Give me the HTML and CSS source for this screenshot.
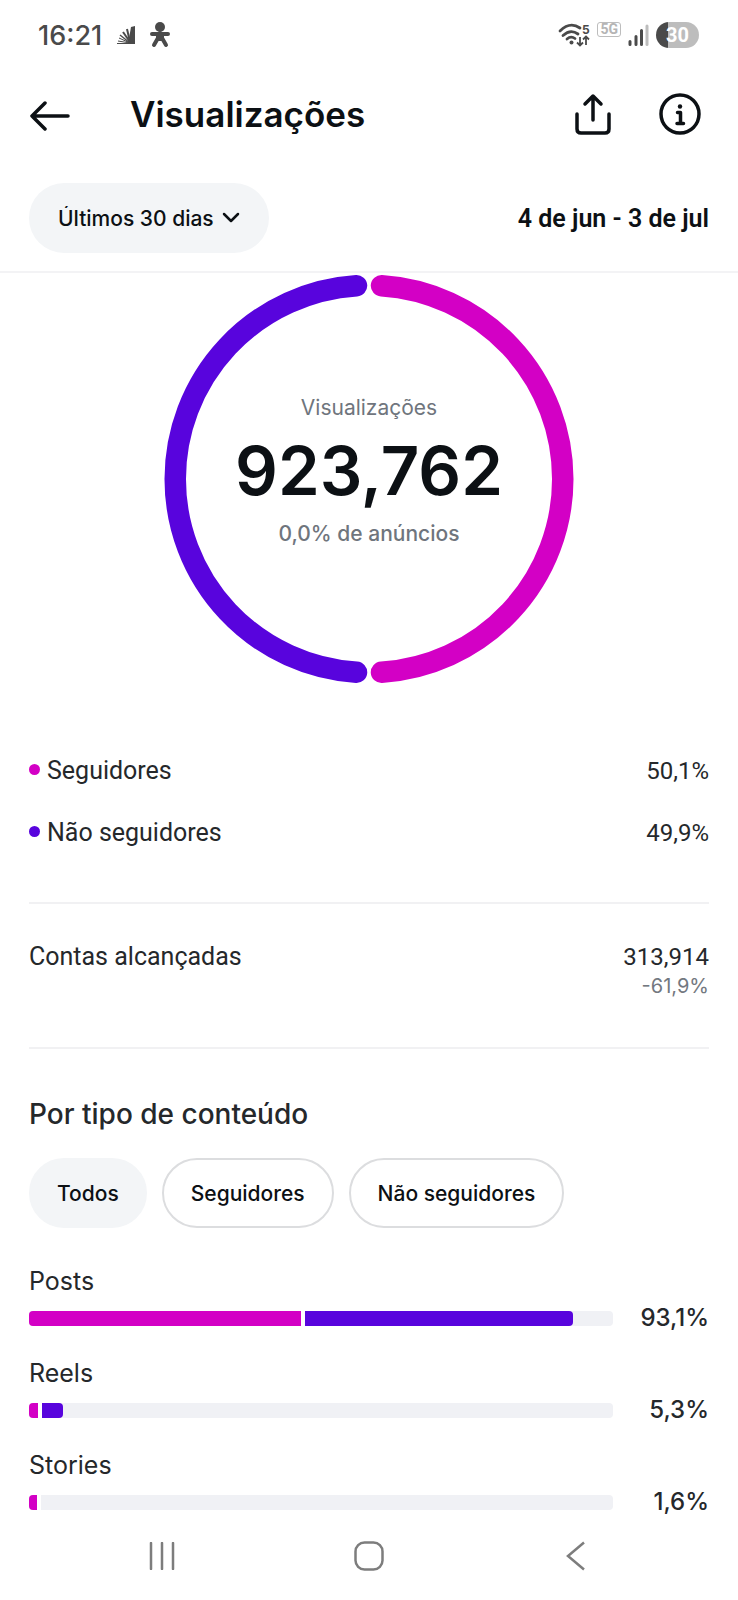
FILE: index.html
```html
<!DOCTYPE html>
<html lang="pt-BR">
<head>
    <meta charset="UTF-8">
    <meta name="viewport" content="width=device-width, initial-scale=1.0">
    <title>Visualizações</title>
    <link rel="stylesheet" href="styles.css">
</head>
<body>

<!-- Status bar -->
<div class="status-bar">
    <div class="status-left">
        <span class="clock">16:21</span>
        <svg width="18" height="18" viewBox="0 0 18 18">
            <path d="M18 0v18H11L14 1z" fill="#4a4a4a"/>
            <g stroke="#4a4a4a" fill="none">
                <path d="M13 16L10 3" stroke-width="2"/>
                <path d="M13 16L6 6" stroke-width="2"/>
                <path d="M13 17L3 9" stroke-width="1.5"/>
                <path d="M13 17L2 12M13 17L1 15" stroke-width="1"/>
                <path d="M13 17.5H0" stroke-width="1"/>
            </g>
        </svg>
        <svg width="20" height="26" viewBox="0 0 20 26">
            <circle cx="10" cy="5" r="5" fill="#4a4a4a"/>
            <path d="M2 12H18M10 11v6M8 16L4 23M12 16l4 7" stroke="#4a4a4a" stroke-width="4" stroke-linecap="round" fill="none"/>
            <path d="M6 11h8v8H6z" fill="#4a4a4a"/>
        </svg>
    </div>
    <div class="status-right">
        <svg class="wifi" width="32" height="26" viewBox="0 0 32 26">
            <g fill="none" stroke="#4a4a4a" stroke-width="2.8" stroke-linecap="round">
                <path d="M2 9Q12-1 22 6"/>
                <path d="M5 13.500Q12.500 6.500 20 12"/>
                <path d="M9 17Q13 13.500 17 16.500"/>
            </g>
            <circle cx="13.500" cy="20.500" r="2" fill="#4a4a4a"/>
            <path d="M22 15v8M19 20.500l3 3 3-3M28 23v-8M25 17.500l3-3 3 3" fill="none" stroke="#4a4a4a" stroke-width="1.8"/>
            <text x="24" y="12" class="wifi-text">5</text>
        </svg>
        <span class="network">5G</span>
        <svg width="21" height="22" viewBox="0 0 21 22">
            <g stroke="#4a4a4a" stroke-width="3" stroke-linecap="round">
                <path d="M2 17.500v3M8 12.500v8M13.500 6.500v14"/>
                <path d="M19 2v18.500" stroke="#bdbdbd"/>
            </g>
        </svg>
        <span class="battery">30</span>
    </div>
</div>

<!-- Header -->
<header class="header">
    <button class="icon-button" aria-label="Voltar">
        <svg width="42" height="34" viewBox="0 0 42 34">
            <path d="M39 19H3M16 6L3 19l13 13" fill="none" stroke="#0c1014" stroke-width="3.500" stroke-linecap="round" stroke-linejoin="round"/>
        </svg>
    </button>
    <h1>Visualizações</h1>
    <button class="icon-button" aria-label="Compartilhar">
        <svg width="36" height="42" viewBox="0 0 36 42">
            <path d="M18 27V4M10 11l8-8 8 8M2 21v15q0 4 4 4h24q4 0 4-4V21" fill="none" stroke="#0c1014" stroke-width="3.500" stroke-linecap="round" stroke-linejoin="round"/>
        </svg>
    </button>
    <button class="icon-button" aria-label="Informações">
        <svg width="42" height="42" viewBox="0 0 42 42">
            <circle cx="21" cy="21" r="19" fill="none" stroke="#0c1014" stroke-width="3.500"/>
            <circle cx="21" cy="13.500" r="2.200" fill="#0c1014"/>
            <path d="M18.500 19.500h3v10.500M18 30.500h6.500" fill="none" stroke="#0c1014" stroke-width="3.500" stroke-linecap="round" stroke-linejoin="round"/>
        </svg>
    </button>
</header>

<!-- Period filter -->
<div class="filter">
    <div class="period">
        <select id="period" aria-label="Período">
            <option>Últimos 30 dias</option>
            <option>Últimos 7 dias</option>
        </select>
        <svg width="18" height="12" viewBox="0 0 18 12">
            <path d="M2 2l7 7 7-7" fill="none" stroke="#0c1014" stroke-width="2.500" stroke-linecap="round" stroke-linejoin="round"/>
        </svg>
    </div>
    <span class="date-range">4 de jun - 3 de jul</span>
</div>

<main>
    <div class="chart">
        <svg width="410" height="410" viewBox="0 0 410 410">
            <g fill="none" stroke-width="21.500" stroke-linecap="round">
                <path d="M217.500 11.700A193.700 193.700 0 0 1 217.500 398.300" stroke="#d300c5"/>
                <path d="M192.500 398.300A193.700 193.700 0 0 1 192.500 11.700" stroke="#5804dd"/>
            </g>
        </svg>
        <div class="chart-text">
            <span class="chart-label">Visualizações</span>
            <span class="total">923,762</span>
            <span class="ads">0,0% de anúncios</span>
        </div>
    </div>

    <section class="legend">
        <div class="row">
            <span class="name"><i class="dot followers"></i>Seguidores</span>
            <span class="number">50,1%</span>
        </div>
        <div class="row">
            <span class="name"><i class="dot non-followers"></i>Não seguidores</span>
            <span class="number">49,9%</span>
        </div>
    </section>

    <section class="reach">
        <div class="row">
            <span>Contas alcançadas</span>
            <span class="number">313,914</span>
        </div>
        <div class="change">-61,9%</div>
    </section>

    <section class="content-type">
        <h2>Por tipo de conteúdo</h2>
        <div class="chips">
            <button class="chip active">Todos</button>
            <button class="chip">Seguidores</button>
            <button class="chip">Não seguidores</button>
        </div>

        <div class="bars">
            <div class="bar-item">
                <span class="bar-name">Posts</span>
                <div class="track">
                    <div class="followers" style="width: 46.6%"></div>
                    <div class="non-followers" style="width: 45.8%"></div>
                </div>
                <span class="value">93,1%</span>
            </div>
            <div class="bar-item">
                <span class="bar-name">Reels</span>
                <div class="track">
                    <div class="followers" style="width: 1.5%"></div>
                    <div class="non-followers" style="width: 3.6%"></div>
                </div>
                <span class="value">5,3%</span>
            </div>
            <div class="bar-item">
                <span class="bar-name">Stories</span>
                <div class="track">
                    <div class="followers" style="width: 1.4%"></div>
                </div>
                <span class="value">1,6%</span>
            </div>
        </div>
    </section>
</main>

<!-- System navigation -->
<nav class="nav-bar">
    <button class="icon-button" aria-label="Recentes">
        <svg width="28" height="28" viewBox="0 0 28 28">
            <path d="M3 1v26M14 1v26M25 1v26" stroke="#7d7d7d" stroke-width="2.500" stroke-linecap="round"/>
        </svg>
    </button>
    <button class="icon-button" aria-label="Início">
        <svg width="30" height="30" viewBox="0 0 30 30">
            <rect x="1.500" y="1.500" width="27" height="27" rx="9" fill="none" stroke="#7d7d7d" stroke-width="2.500"/>
        </svg>
    </button>
    <button class="icon-button" aria-label="Voltar à tela anterior">
        <svg width="20" height="30" viewBox="0 0 20 30">
            <path d="M18 1.500L2 15l16 13.500" fill="none" stroke="#7d7d7d" stroke-width="2.500"/>
        </svg>
    </button>
</nav>

</body>
</html>
```
FILE: styles.css
```css
* {
    box-sizing: border-box;
}
body {
    margin: 0;
    background-color: #ffffff;
    color: #0c1014;
    font-family: Inter, sans-serif;
}
svg {
    display: block;
    flex-shrink: 0;
}
button, select {
    margin: 0;
    padding: 0;
    border: none;
    background: none;
    color: inherit;
    font-family: inherit;
    cursor: pointer;
}

/* Status bar */
.status-bar {
    display: flex;
    justify-content: space-between;
    align-items: center;
    height: 70px;
    padding: 0 39px 0 38px;
}
.status-left, .status-right {
    display: flex;
    align-items: center;
}
.status-left {
    gap: 15px;
}
.status-right {
    gap: 7px;
}
.clock {
    color: #4a4a4a;
    font-size: 27px;
    font-weight: 500;
}
.wifi {
    overflow: visible;
}
.wifi-text {
    fill: #4a4a4a;
    font-size: 12px;
    font-weight: 700;
}
.network {
    align-self: flex-start;
    padding: 0 2px;
    border: 1px solid #bdbdbd;
    border-radius: 3px;
    color: #b5b5b5;
    font-family: Roboto, sans-serif;
    font-size: 14px;
    font-weight: 700;
    line-height: 13px;
}
.battery {
    width: 43px;
    border-radius: 13px;
    background: linear-gradient(90deg, #4a4a4a 28%, #bdbdbd 28%);
    color: #ffffff;
    font-family: Roboto, sans-serif;
    font-size: 20px;
    font-weight: 700;
    line-height: 26px;
    text-align: center;
}

/* Header */
.header {
    display: flex;
    align-items: center;
    height: 88px;
    padding: 0 37px 0 29px;
}
h1 {
    flex: 1;
    margin: 0 0 0 59px;
    font-size: 35px;
    font-weight: 600;
}
.header .icon-button + .icon-button {
    margin-left: 48px;
}

/* Period filter */
.filter {
    display: flex;
    justify-content: space-between;
    align-items: center;
    padding: 25px 29px 18px;
    border-bottom: 2px solid #f3f3f5;
}
.period {
    display: flex;
    align-items: center;
    gap: 8px;
    height: 70px;
    padding: 0 29px;
    border-radius: 35px;
    background-color: #f3f5f7;
}
.period select {
    appearance: none;
    font-size: 21px;
    font-weight: 500;
}
.date-range {
    font-family: Roboto, sans-serif;
    font-size: 25px;
    font-weight: 600;
}

main {
    padding: 1px 29px 0;
}

/* Ring chart */
.chart {
    display: grid;
    place-items: center;
}
.chart > * {
    grid-area: 1 / 1;
}
.chart-text {
    display: flex;
    flex-direction: column;
    align-items: center;
    gap: 14px;
    padding-bottom: 16px;
    color: #6f757d;
}
.chart-label, .ads {
    font-size: 21px;
    line-height: 28px;
}
.total {
    color: #0c1014;
    font-size: 67px;
    font-weight: 600;
    line-height: 70px;
}
.ads {
    font-weight: 500;
}

/* Legend and reach */
.legend, .reach {
    border-bottom: 2px solid #f1f1f3;
    color: #25282b;
    font-family: Roboto, sans-serif;
    font-size: 25px;
}
.legend {
    display: flex;
    flex-direction: column;
    gap: 28px;
    padding: 70px 0 52px;
    line-height: 34px;
}
.row {
    display: flex;
    justify-content: space-between;
}
.name {
    display: flex;
    align-items: center;
    gap: 7px;
}
.number {
    font-size: 24px;
}
.dot {
    width: 11px;
    height: 11px;
    margin-bottom: 4px;
    border-radius: 50%;
}
.followers {
    background-color: #d300c5;
}
.non-followers {
    background-color: #5804dd;
}
.reach {
    padding: 38px 0 47px;
    line-height: 30px;
}
.change {
    color: #737880;
    font-family: Inter, sans-serif;
    font-size: 20px;
    line-height: 28px;
    text-align: right;
}

/* Content type */
.content-type {
    padding-top: 45px;
    color: #25282b;
}
h2 {
    margin: 0 0 24px;
    font-size: 28px;
    font-weight: 500;
    line-height: 40px;
}
.chips {
    display: flex;
    gap: 15px;
    margin-bottom: 38px;
}
.chip {
    height: 70px;
    padding: 0 27px;
    border: 2px solid #dcdddf;
    border-radius: 35px;
    color: #0c1014;
    font-size: 21px;
    font-weight: 500;
}
.chip.active {
    padding: 0 26px;
    border-color: #f3f5f7;
    background-color: #f3f5f7;
}
.bars {
    display: flex;
    flex-direction: column;
    gap: 25px;
}
.bar-item {
    display: grid;
    grid-template-columns: 1fr 96px;
    align-items: center;
    row-gap: 7px;
    font-size: 24px;
    line-height: 30px;
}
.bar-name {
    grid-column: 1 / 3;
    font-size: 25px;
}
.track {
    display: flex;
    height: 15px;
    border-radius: 4px;
    background-color: #f0f1f5;
    overflow: hidden;
}
.track .followers {
    box-shadow: 4px 0 0 #ffffff;
    margin-right: 4px;
}
.track .non-followers {
    border-radius: 0 4px 4px 0;
}
.value {
    font-weight: 500;
    text-align: right;
}

/* System navigation */
.nav-bar {
    display: flex;
    height: 78px;
    padding: 0 58px;
}
.nav-bar .icon-button {
    display: flex;
    flex: 1;
    justify-content: center;
    align-items: center;
}
```
